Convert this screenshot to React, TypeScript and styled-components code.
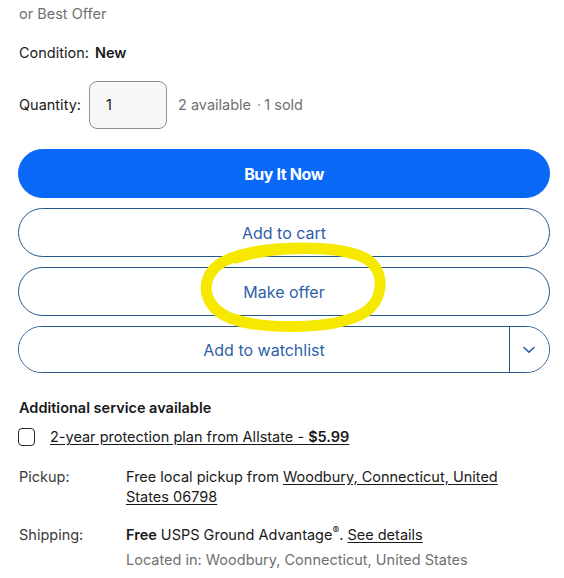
import styled, { createGlobalStyle } from "styled-components";

const GlobalStyle = createGlobalStyle`
  html, body {
    margin: 0;
    padding: 0;
    background: #ffffff;
  }
  body {
    font-family: Inter, "Liberation Sans", Arial, sans-serif;
    color: #191919;
  }
`;

const Page = styled.div`
  position: relative;
  width: 564px;
  height: 578px;
  overflow: hidden;
  box-sizing: border-box;
  padding: 5px 14px 0 18px;
  display: flex;
  flex-direction: column;
  font-size: 14.5px;
`;

const Muted = styled.div`
  line-height: 18px;
  color: #707070;
  padding-left: 1px;
`;

const InfoRow = styled.div<{ $mt?: number }>`
  display: flex;
  align-items: center;
  line-height: 18px;
  margin-top: ${({ $mt }) => $mt ?? 0}px;
  padding-left: 1px;
`;

const Label = styled.span`
  color: #191919;
  margin-right: 6px;
`;

const Strong = styled.span`
  font-weight: 600;
`;

const QtyBox = styled.div`
  box-sizing: border-box;
  width: 78px;
  height: 48px;
  margin-left: 8px;
  border: 1px solid #8f8f8f;
  border-radius: 8px;
  background: #f7f7f7;
  display: flex;
  align-items: center;
  padding-left: 16px;
`;

const QtyNote = styled.span`
  color: #707070;
  margin-left: 11px;
`;

const Dot = styled.span`
  margin: 0 3px 0 6px;
  color: #a0a0a0;
`;

const Buttons = styled.div`
  display: flex;
  flex-direction: column;
  gap: 10px;
  margin-top: 20px;
`;

const PillButton = styled.button<{ $primary?: boolean }>`
  box-sizing: border-box;
  height: 49px;
  width: 100%;
  border-radius: 25px;
  font-family: inherit;
  font-size: 16px;
  cursor: pointer;
  border: 1px solid ${({ $primary }) => ($primary ? "#0968f6" : "#24588c")};
  background: ${({ $primary }) => ($primary ? "#0968f6" : "#ffffff")};
  color: ${({ $primary }) => ($primary ? "#ffffff" : "#2f5fa8")};
  font-weight: ${({ $primary }) => ($primary ? 700 : 400)};
  letter-spacing: ${({ $primary }) => ($primary ? "-0.4px" : "0")};
`;

const SplitButton = styled.div`
  box-sizing: border-box;
  height: 47px;
  display: flex;
  border: 1px solid #24588c;
  border-radius: 24px;
  overflow: hidden;
`;

const SplitMain = styled.button`
  flex: 1;
  border: none;
  background: #fff;
  color: #2f5fa8;
  font-family: inherit;
  font-size: 16px;
  border-right: 1px solid #24588c;
`;

const SplitToggle = styled.button`
  width: 39px;
  border: none;
  background: #fff;
  display: flex;
  align-items: center;
  justify-content: center;
  padding: 0 2px 0 0;
`;

const SectionTitle = styled.div`
  margin-top: 26px;
  font-weight: 600;
  line-height: 18px;
  color: #191919;
  padding-left: 1px;
`;

const CheckRow = styled.div`
  display: flex;
  align-items: center;
  margin-top: 11px;
  line-height: 18px;
`;

const Checkbox = styled.span`
  box-sizing: border-box;
  width: 17px;
  height: 18px;
  border: 1.5px solid #2a2a2a;
  border-radius: 4px;
  margin-right: 15px;
`;

const Link = styled.span`
  text-decoration: underline;
  text-underline-offset: 2px;
  color: #191919;
`;

const DetailGrid = styled.div`
  display: grid;
  grid-template-columns: 107px 1fr;
  row-gap: 18px;
  margin-top: 21px;
  line-height: 20px;
  padding-left: 1px;
`;

const DetailLabel = styled.div`
  color: #3a3a3a;
`;

const DetailValue = styled.div<{ $narrow?: boolean }>`
  color: #191919;
  max-width: ${({ $narrow }) => ($narrow ? "385px" : "none")};
`;

const Sub = styled.div`
  color: #707070;
  margin-top: 5px;
`;

const Highlight = styled.svg`
  position: absolute;
  left: 196px;
  top: 238px;
  pointer-events: none;
`;

function Chevron() {
  return (
    <svg width="12" height="8" viewBox="0 0 12 8">
      <path d="M1 1.5 L6 6.2 L11 1.5" fill="none" stroke="#2f5fa8" strokeWidth="1.6" strokeLinecap="round" strokeLinejoin="round" />
    </svg>
  );
}

export default function App() {
  return (
    <>
      <GlobalStyle />
      <Page>
        <Muted>or Best Offer</Muted>

        <InfoRow $mt={21}>
          <Label>Condition:</Label>
          <Strong>New</Strong>
        </InfoRow>

        <InfoRow $mt={19}>
          <span>Quantity:</span>
          <QtyBox>1</QtyBox>
          <QtyNote>
            2 available<Dot>·</Dot>1 sold
          </QtyNote>
        </InfoRow>

        <Buttons>
          <PillButton $primary>Buy It Now</PillButton>
          <PillButton>Add to cart</PillButton>
          <PillButton>Make offer</PillButton>
          <SplitButton>
            <SplitMain>Add to watchlist</SplitMain>
            <SplitToggle>
              <Chevron />
            </SplitToggle>
          </SplitButton>
        </Buttons>

        <SectionTitle>Additional service available</SectionTitle>
        <CheckRow>
          <Checkbox />
          <Link>
            2-year protection plan from Allstate - <Strong>$5.99</Strong>
          </Link>
        </CheckRow>

        <DetailGrid>
          <DetailLabel>Pickup:</DetailLabel>
          <DetailValue $narrow>
            Free local pickup from <Link>Woodbury, Connecticut, United States 06798</Link>
          </DetailValue>
          <DetailLabel>Shipping:</DetailLabel>
          <DetailValue>
            <Strong>Free</Strong> USPS Ground Advantage<sup style={{ fontSize: 10, lineHeight: 0 }}>®</sup>.{" "}
            <Link>See details</Link>
            <Sub>Located in: Woodbury, Connecticut, United States</Sub>
          </DetailValue>
        </DetailGrid>

        <Highlight width="196" height="96" viewBox="0 0 196 96">
          <path
            d="M40 20 C 75 8, 148 6, 172 22 C 190 34, 188 64, 166 76 C 136 92, 66 92, 34 80 C 10 70, 6 50, 14 36 C 22 22, 44 14, 80 11 C 110 9, 140 10, 158 16"
            fill="none"
            stroke="#f7e800"
            strokeWidth="11"
            strokeLinecap="round"
            strokeLinejoin="round"
          />
        </Highlight>
      </Page>
    </>
  );
}
